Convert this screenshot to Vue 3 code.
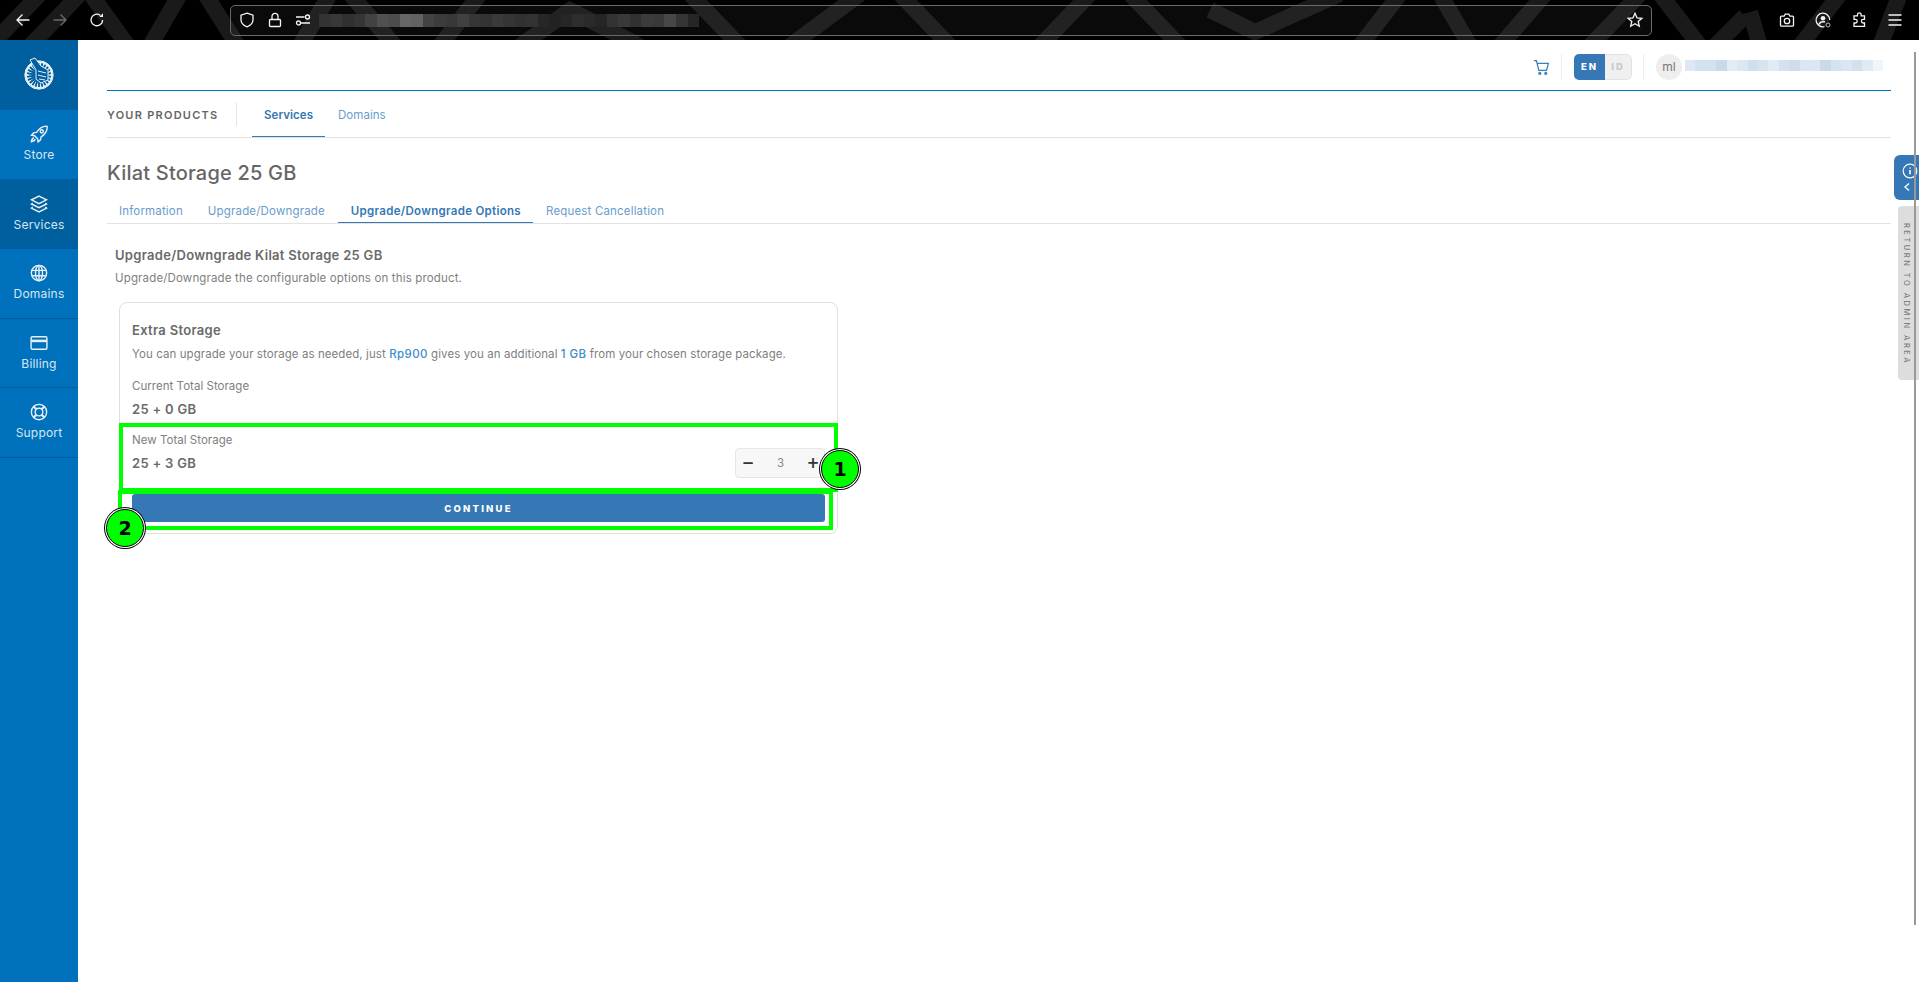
<script setup>
const urlCells = ['#333','#383838','#303030','#353535','#424242','#505050','#4c4c4c','#666','#626262','#434343','#3c3c3c','#383838','#404040','#363636','#333','#3a3a3a','#353535','#313131','#333','#272727','#222','#262626','#2d2d2d','#2a2a2a','#252525','#333','#393939','#313131','#3c3c3c','#393939','#474747','#353535','#262626']
const userCells = ['#dde8f3','#d3e2ef','#d2e1ee','#c7d9ea','#e3ecf5','#dce7f2','#cfdfed','#d6e3f0','#e2ebf4','#d4e2ef','#cddded','#dbe6f2','#dce7f2','#c9daea','#d5e2ef','#dae6f1','#d3e1ee','#e0eaf4','#f0f5fa']
const spokes = Array.from({ length: 22 }, (_, i) => i * (360 / 22))
const stripes = [
  'M-10 46 L40 -6','M30 46 L80 -6','M92 -4 L128 46','M150 46 L180 -6','M205 -6 L238 46','M300 46 L330 -6','M350 -6 L395 46',
  'M440 46 L480 -6','M520 46 L570 10 L640 46','M690 -6 L740 46','M790 46 L860 -6','M900 -6 L950 46','M1040 46 L1090 -6','M1130 -6 L1180 46',
  'M1210 10 L1255 32 L1340 -6','M1360 46 L1400 -6','M1440 -6 L1470 46','M1500 46 L1545 -6','M1590 46 L1640 -6','M1660 -6 L1700 46','M1715 46 L1745 16','M1750 12 L1760 46','M1800 46 L1840 -6','M1880 46 L1900 -6'
]
</script>

<template>
  <div class="page">
    <header class="chrome">
      <svg class="pattern" viewBox="0 0 1919 40" preserveAspectRatio="none" aria-hidden="true">
        <path v-for="d in stripes" :key="d" :d="d" fill="none" stroke="#1a1a1a" stroke-width="16" />
      </svg>
      <div class="nav-icons">
        <svg class="ti" viewBox="0 0 16 16"><path d="M14.5 8H2M7.5 2.5 2 8l5.5 5.5" /></svg>
        <svg class="ti dim" viewBox="0 0 16 16"><path d="M1.5 8H14M8.5 2.5 14 8l-5.5 5.5" /></svg>
        <svg class="ti" viewBox="0 0 16 16"><path d="M13.6 7.9A5.8 5.8 0 1 1 11.4 3.4" /><path d="M14 1.3v3.6h-3.6z" class="solid" /></svg>
      </div>
      <div class="urlbar">
        <svg class="ti" viewBox="0 0 16 16"><path d="M8 1.2 14 3.2v4.6c0 3.4-2.5 5.7-6 7-3.5-1.3-6-3.6-6-7V3.2z" /></svg>
        <svg class="ti" viewBox="0 0 16 16"><path d="M3.5 7.5h9a1 1 0 0 1 1 1v5a1 1 0 0 1-1 1h-9a1 1 0 0 1-1-1v-5a1 1 0 0 1 1-1zM5 7.5V4.3a3 3 0 0 1 6 0v3.2" /></svg>
        <svg class="ti" viewBox="0 0 16 16"><path d="M1 5h8.5M6 11h9" /><circle cx="12.5" cy="5" r="2" /><circle cx="3.5" cy="11" r="2" /></svg>
        <div class="url-blur"><i v-for="(c, i) in urlCells" :key="i" class="cell" :style="{ background: c }"></i></div>
        <svg class="ti star" viewBox="0 0 16 16"><path d="m8 1.3 2 4.5 4.9.5-3.7 3.2 1.1 4.8L8 11.8l-4.3 2.5 1.1-4.8L1.1 6.3 6 5.8z" /></svg>
      </div>
      <div class="tool-icons">
        <svg class="ti" viewBox="0 0 16 16"><path d="M2.5 4.2h2.6l1.1-2h3.6l1.1 2h2.6a1 1 0 0 1 1 1v8a1 1 0 0 1-1 1h-11a1 1 0 0 1-1-1v-8a1 1 0 0 1 1-1z" /><circle cx="8" cy="9" r="2.7" /></svg>
        <svg class="ti" viewBox="0 0 16 16"><path d="M9.5 14.6A6.8 6.8 0 1 1 14.7 8" /><circle cx="8" cy="6.3" r="2.3" class="solid" /><path d="M4 12.5c.6-2 2-2.8 4-2.8h2" class="thick" /><circle cx="13" cy="13" r="2" class="thin" /></svg>
        <svg class="ti" viewBox="0 0 16 16"><path d="M6.5 3.8V2.6a1.8 1.8 0 0 1 3.6 0v1.2h3.4v3.6h-1.3a1.8 1.8 0 0 0 0 3.6h1.3v3.4H3V11h1.4a1.8 1.8 0 0 0 0-3.6H3V3.8z" /></svg>
        <svg class="ti" viewBox="0 0 16 16"><path d="M1.5 3h13M1.5 8h13M1.5 13h13" /></svg>
      </div>
    </header>

    <div class="body">
      <nav class="sidebar">
        <div class="logo">
          <svg width="36" height="40" viewBox="0 0 36 40">
            <circle cx="18" cy="20" r="14" fill="#e6f0f7" />
            <g stroke="#00609f" stroke-width="1.5">
              <line v-for="a in spokes" :key="a" x1="18" y1="8" x2="18" y2="32" :transform="`rotate(${a} 18 20)`" />
            </g>
            <circle cx="18" cy="20" r="14.2" fill="none" stroke="#e6f0f7" stroke-width="1" />
            <path d="M9 5 14 3 20 11 27 15 27 25 20 28 15 24 15 15z" fill="#00609f" stroke="#e6f0f7" stroke-width="1" />
            <path d="M17 16 25 18M17 20 25 22M18 24 24 25" stroke="#e6f0f7" stroke-width="1" />
          </svg>
        </div>
        <a class="nav-item">
          <svg class="ni" viewBox="0 0 24 24"><path d="M21 2.5c-5 .3-9 2.6-12 7.5l-3.5.7L3 13.5l3.7.6 3.7 3.7.6 3.7 2.8-2.5.7-3.5c5-3 7.2-7 7.5-12z" /><circle cx="15.3" cy="8.8" r="1.9" /><path d="M6 16.5c-1.7.6-3 2.6-3.2 4.8 2.2-.2 4.2-1.5 4.8-3.2" /></svg>
          <span>Store</span>
        </a>
        <a class="nav-item active">
          <svg class="ni" viewBox="0 0 24 24"><path d="M12 2.5 21 7l-9 4.5L3 7z" /><path d="M4.5 10.8 3 12l9 4.5 9-4.5-1.5-1.2" /><path d="M4.5 15.8 3 17l9 4.5 9-4.5-1.5-1.2" /></svg>
          <span>Services</span>
        </a>
        <a class="nav-item">
          <svg class="ni" viewBox="0 0 24 24"><circle cx="12" cy="12" r="9.2" /><ellipse cx="12" cy="12" rx="4.2" ry="9.2" /><path d="M12 2.8v18.4M3.4 8.8h17.2M3.4 15.2h17.2" /></svg>
          <span>Domains</span>
        </a>
        <a class="nav-item">
          <svg class="ni" viewBox="0 0 24 24"><rect x="2.5" y="4.5" width="19" height="15" rx="1.5" /><path d="M2.5 9.5h19" stroke-width="3" /></svg>
          <span>Billing</span>
        </a>
        <a class="nav-item">
          <svg class="ni" viewBox="0 0 24 24"><circle cx="12" cy="12" r="9.2" /><circle cx="12" cy="12" r="4.6" /><path d="M5.5 5.5 8.8 8.8M18.5 5.5 15.2 8.8M5.5 18.5l3.3-3.3M18.5 18.5l-3.3-3.3" stroke-width="2.6" /></svg>
          <span>Support</span>
        </a>
      </nav>

      <main class="main">
        <div class="topbar">
          <svg class="cart" viewBox="0 0 16 16"><path d="M.8 1.5h2.4l2.3 9.3h7.2l1.8-6.6H4" /><circle cx="6.4" cy="13.6" r=".9" /><circle cx="12" cy="13.6" r=".9" /></svg>
          <span class="vsep sep-a"></span>
          <div class="lang"><span class="lang-on">EN</span><span class="lang-off">ID</span></div>
          <span class="vsep sep-b"></span>
          <span class="avatar">ml</span>
          <div class="user-blur"><i v-for="(c, i) in userCells" :key="i" class="cell" :style="{ background: c }"></i></div>
        </div>

        <div class="prod-tabs">
          <span class="prod-title">YOUR PRODUCTS</span>
          <span class="prod-sep"></span>
          <a class="prod-tab on">Services</a>
          <a class="prod-tab">Domains</a>
        </div>

        <h1 class="title">Kilat Storage 25 GB</h1>

        <div class="subtabs">
          <a class="subtab">Information</a>
          <a class="subtab">Upgrade/Downgrade</a>
          <a class="subtab on">Upgrade/Downgrade Options</a>
          <a class="subtab">Request Cancellation</a>
        </div>

        <section class="panel">
          <h2 class="panel-h">Upgrade/Downgrade Kilat Storage 25 GB</h2>
          <p class="panel-d">Upgrade/Downgrade the configurable options on this product.</p>

          <div class="card">
            <h3 class="card-h">Extra Storage</h3>
            <p class="card-d">You can upgrade your storage as needed, just <b>Rp900</b> gives you an additional <b>1 GB</b> from your chosen storage package.</p>
            <div class="lbl cur">Current Total Storage</div>
            <div class="val">25 + 0 GB</div>
            <div class="new-row">
              <div>
                <div class="lbl">New Total Storage</div>
                <div class="val">25 + 3 GB</div>
              </div>
              <div class="stepper"><span class="st-btn">−</span><span class="st-val">3</span><span class="st-btn">+</span></div>
            </div>
            <button class="continue">CONTINUE</button>

            <div class="mark box1"></div>
            <div class="mark box2"></div>
            <div class="badge b1">1</div>
            <div class="badge b2">2</div>
          </div>
        </section>
      </main>
    </div>

    <div class="side-info">
      <svg width="16" height="16" viewBox="0 0 16 16"><circle cx="8" cy="8" r="6.8" fill="none" stroke="#fff" stroke-width="1.2" /><path d="M8 7v4.2M8 4.4v1.2" stroke="#fff" stroke-width="1.6" /></svg>
      <svg width="10" height="10" viewBox="0 0 10 10"><path d="M7 1.5 3 5l4 3.5" fill="none" stroke="#fff" stroke-width="1.4" /></svg>
    </div>
    <div class="side-return"><span>RETURN TO ADMIN AREA</span></div>
    <div class="scroll-thumb"></div>
  </div>
</template>

<style>
html, body { margin: 0; background: #fff; }
</style>

<style scoped>
.page { position: relative; width: 1919px; height: 982px; overflow: hidden; background: #fff; font-family: Inter, "Open Sans", sans-serif; color: #666; }
.chrome { position: relative; display: flex; align-items: center; height: 40px; background: #000; }
.pattern { position: absolute; inset: 0; width: 100%; height: 100%; }
.ti { width: 16px; height: 16px; fill: none; stroke: #f4f4f4; stroke-width: 1.3; flex: none; }
.ti.dim { stroke: #6b6b6b; }
.ti .solid { fill: #f4f4f4; stroke: none; }
.ti .thick { stroke-width: 1.6; }
.ti .thin { stroke: #bbb; stroke-width: 1; }
.nav-icons { position: relative; display: flex; gap: 21px; margin-left: 15px; width: 215px; flex: none; }
.urlbar { position: relative; display: flex; align-items: center; gap: 12px; width: 1422px; height: 31px; box-sizing: border-box; padding: 0 8px; border: 1px solid #6a6a6a; border-radius: 5px; background: rgba(255, 255, 255, 0.04); flex: none; }
.url-blur { display: flex; width: 380px; height: 13px; margin-left: -4px; }
.cell { flex: 1; display: block; }
.star { margin-left: auto; }
.tool-icons { position: relative; display: flex; gap: 20px; margin-left: 127px; }
.body { display: flex; height: 942px; }
.sidebar { width: 78px; flex: none; background: #0071bc; display: flex; flex-direction: column; color: #d8e6f2; }
.logo { height: 70px; flex: none; background: #00609f; display: flex; align-items: center; justify-content: center; box-sizing: border-box; }
.nav-item { height: 69.6px; box-sizing: border-box; border-bottom: 1px solid #005d99; display: flex; flex-direction: column; align-items: center; padding-top: 14px; font-size: 12px; line-height: 16px; letter-spacing: 0.2px; flex: none; }
.nav-item.active { background: #00609f; }
.ni { width: 20px; height: 20px; fill: none; stroke: #e8f0f7; stroke-width: 1.7; margin-bottom: 3px; }
.main { flex: 1; min-width: 0; padding: 0 28px 0 29px; }
.topbar { position: relative; display: flex; align-items: center; height: 50px; border-bottom: 1px solid #0071bc; justify-content: flex-end; }
.cart { width: 17px; height: 17px; fill: none; stroke: #3a7fc0; stroke-width: 1.2; margin-right: 11px; margin-top: 4px; }
.vsep { width: 1px; height: 26px; background: #eee; margin-top: 4px; }
.lang { display: flex; width: 58px; height: 26px; margin: 4px 0 0 12px; border-radius: 5px; overflow: hidden; font-size: 9.5px; font-weight: 800; letter-spacing: 2px; line-height: 26px; text-align: center; }
.lang-on { width: 31px; background: #3578b5; color: #fff; }
.lang-off { width: 27px; box-sizing: border-box; background: #f0f0f0; color: #c8c8c8; border: 1px solid #e3e3e3; border-left: 0; border-radius: 0 5px 5px 0; line-height: 24px; }
.sep-b { margin-left: 11px; }
.avatar { width: 26px; height: 26px; margin: 4px 0 0 12px; border-radius: 50%; background: #eee; font-size: 12px; line-height: 26px; text-align: center; color: #777; flex: none; }
.user-blur { display: flex; width: 198px; height: 11px; margin: 0 8px 0 3px; }
.prod-tabs { display: flex; align-items: stretch; height: 46px; border-bottom: 1px solid #e3e3e3; }
.prod-title { align-self: center; margin-top: 2px; font-size: 11px; font-weight: 600; letter-spacing: 1.25px; color: #666; width: 129px; flex: none; white-space: nowrap; }
.prod-sep { align-self: center; width: 1px; height: 23px; background: #e3e3e3; margin-right: 15px; }
.prod-tab { display: flex; align-items: center; font-size: 11.5px; letter-spacing: 0.05px; padding: 2px 12px 0; color: #6a9ccb; margin-bottom: -1px; height: 46px; box-sizing: border-box; }
.prod-tab.on { color: #3578b5; font-weight: 600; border-bottom: 1px solid #3578b5; margin-right: 1px; }
.title { margin: 23px 0 14px; font-size: 20px; line-height: 24px; font-weight: 500; letter-spacing: 0.2px; color: #666; }
.subtabs { display: flex; height: 24px; border-bottom: 1px solid #e3e3e3; }
.subtab { padding: 0 12.5px; font-size: 11.5px; letter-spacing: 0.17px; line-height: 24px; color: #6a9ccb; white-space: nowrap; height: 24px; box-sizing: border-box; }
.subtab:first-child { padding-left: 12px; }
.subtab.on { font-weight: 600; letter-spacing: 0.3px; color: #3578b5; border-bottom: 1px solid #3578b5; margin-left: 1px; }
.panel { padding-left: 8px; }
.panel-h { margin: 22px 0 6px; font-size: 13px; line-height: 18px; font-weight: 600; letter-spacing: 0.3px; color: #6a6a6a; }
.panel-d { margin: 0 0 16px; font-size: 11.5px; line-height: 16px; letter-spacing: 0.15px; color: #808080; }
.card { position: relative; margin-left: 4px; width: 719px; box-sizing: border-box; padding: 18px 12px 11px; border: 1px solid #e0e0e0; border-radius: 8px; }
.card-h { margin: 0 0 7px; font-size: 13px; line-height: 18px; font-weight: 600; letter-spacing: 0.3px; color: #6a6a6a; }
.card-d { margin: 0 0 16px; font-size: 11.5px; line-height: 16px; letter-spacing: 0.08px; color: #808080; white-space: nowrap; }
.card-d b { font-weight: 500; letter-spacing: 0.4px; color: #3c8dca; }
.lbl { font-size: 11.5px; line-height: 16px; letter-spacing: 0.03px; color: #808080; }
.val { margin-top: 6px; font-size: 13px; line-height: 18px; font-weight: 600; letter-spacing: 0.3px; color: #6a6a6a; }
.new-row { display: flex; justify-content: space-between; margin-top: 14px; }
.stepper { display: flex; align-items: center; justify-content: space-between; width: 90px; height: 30px; margin-top: 16px; box-sizing: border-box; padding: 0 3px 0 4px; background: #f7f7f7; border: 1px solid #e6e6e6; border-radius: 4px; }
.st-btn { width: 16px; text-align: center; font-family: "DejaVu Sans", sans-serif; font-size: 15px; font-weight: 700; color: #333; }
.st-val { font-size: 11.5px; color: #888; }
.continue { display: block; width: 100%; height: 28px; margin-top: 16px; padding: 0; border: 0; border-radius: 3px; background: #3578b5; color: #fff; font-family: inherit; font-size: 9.5px; font-weight: 800; letter-spacing: 2.2px; }
.mark { position: absolute; box-sizing: border-box; border: 4px solid #00ff00; }
.box1 { left: -1px; top: 120px; width: 719px; height: 69px; }
.box2 { left: -2px; top: 187px; width: 715px; height: 40px; }
.badge { position: absolute; width: 38px; height: 38px; box-sizing: border-box; border-radius: 50%; background: #00ff00; border: 1.5px solid #000; box-shadow: 0 0 0 1px #fff, 0 0 0 2px #000; font-family: "DejaVu Sans", sans-serif; font-weight: 700; font-size: 19px; line-height: 36px; text-align: center; color: #000; }
.b1 { left: 701px; top: 147px; }
.b2 { left: -14px; top: 206px; }
.side-info { position: absolute; left: 1894px; top: 155px; width: 25px; height: 45px; box-sizing: border-box; padding: 8px 0 0 8px; background: #3578b5; border-radius: 6px 0 0 6px; display: flex; flex-direction: column; gap: 3px; }
.side-return { position: absolute; left: 1898px; top: 206px; width: 21px; height: 174px; background: #ddd; border-radius: 4px 0 0 4px; }
.side-return span { display: block; writing-mode: vertical-rl; font-size: 7.5px; font-weight: 500; letter-spacing: 2.5px; color: #808080; margin: 17px 0 0 4px; white-space: nowrap; }
.scroll-thumb { position: absolute; left: 1914px; top: 52px; width: 2px; height: 873px; background: #999; }
</style>
